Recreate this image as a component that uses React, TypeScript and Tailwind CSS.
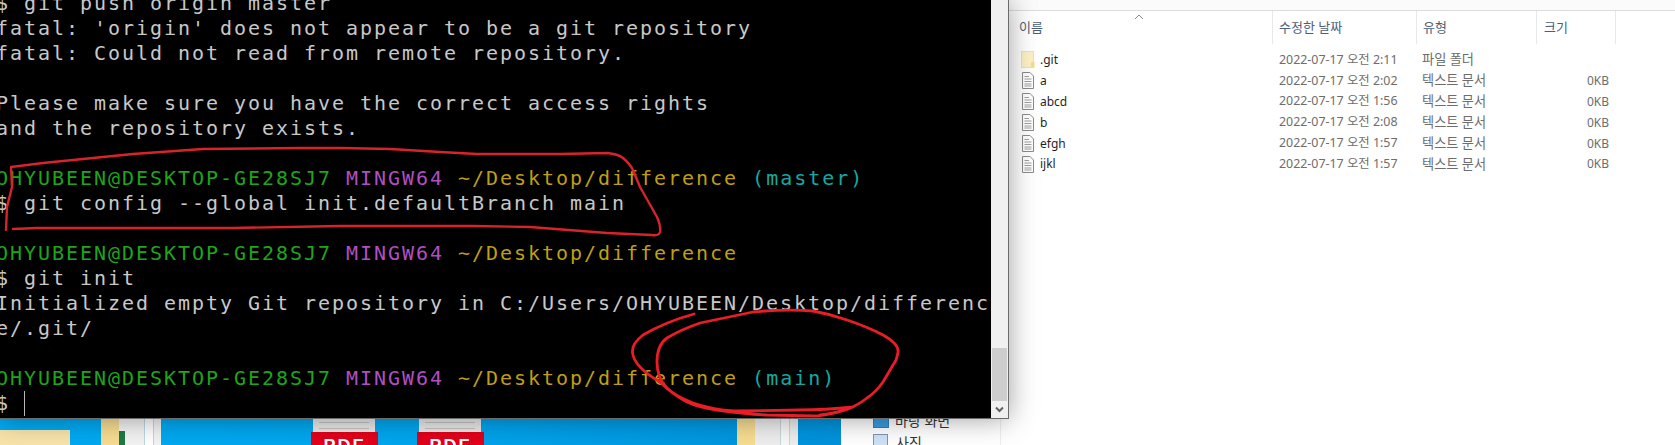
import React from "react";

const G = ({ c }: { c: string }) => <span className="text-[#1fa51c]">{c}</span>;

function Prompt({ branch }: { branch?: string }) {
  return (
    <div className="h-[25px]">
      <G c="OHYUBEEN@DESKTOP-GE28SJ7" /> <span className="text-[#b14fc2]">MINGW64</span>{" "}
      <span className="text-[#bf9f12]">~/Desktop/difference</span>
      {branch ? <span className="text-[#14a8a4]"> ({branch})</span> : null}
    </div>
  );
}

function Line({ t }: { t?: string }) {
  return <div className="h-[25px]">{t ?? ""}</div>;
}

function Terminal() {
  return (
    <div className="absolute left-0 top-0 z-10 flex h-[419px] w-[1009px] border-r border-b border-[#6b6b6b] bg-black shadow-[0_0_26px_rgba(0,0,0,0.38)]">
      <div className="h-full w-[991px] overflow-hidden">
        <div className="-ml-1 -mt-[9px] whitespace-pre font-['DejaVu_Sans_Mono',monospace] text-[20px] leading-[25px] tracking-[1.96px] text-[#c8c8c8]">
          <Line t="$ git push origin master" />
          <Line t="fatal: 'origin' does not appear to be a git repository" />
          <Line t="fatal: Could not read from remote repository." />
          <Line />
          <Line t="Please make sure you have the correct access rights" />
          <Line t="and the repository exists." />
          <Line />
          <Prompt branch="master" />
          <Line t="$ git config --global init.defaultBranch main" />
          <Line />
          <Prompt />
          <Line t="$ git init" />
          <Line t="Initialized empty Git repository in C:/Users/OHYUBEEN/Desktop/differenc" />
          <Line t="e/.git/" />
          <Line />
          <Prompt branch="main" />
          <div className="flex h-[25px]">
            <span>$ </span>
            <span className="h-[25px] w-px bg-[#b8b8b8]" />
          </div>
        </div>
      </div>
      <div className="flex h-full w-[17px] flex-col justify-end bg-[#f0f0f0]">
        <div className="mx-px h-[53px] bg-[#cdcdcd]" />
        <div className="flex h-[17px] items-center justify-center">
          <svg width="9" height="7" viewBox="0 0 9 7" fill="none">
            <path d="M1 1.5 L4.5 5 L8 1.5" stroke="#606060" strokeWidth="2" />
          </svg>
        </div>
      </div>
    </div>
  );
}

function Redlines() {
  return (
    <svg className="absolute left-0 top-0 z-20" width="1009" height="418" fill="none" strokeLinecap="round" strokeLinejoin="round">
      <path
        d="M6 230 L7 207 L12 187 L11 167 L43 163 L133 154 L203 149 L300 148 L340 148 L390 149 L440 152 L477 154 L560 154 L607 153 Q618 154 623 158 Q630 164 633 170 L640 187 L657 217 Q661 226 660 232 Q659 236 652 235 L607 233 L530 227 L473 226 L340 226 L233 228 L37 228 L13 229"
        stroke="#d8232e"
        strokeWidth="2.4"
      />
      <path
        d="M694 314 Q665 322 643 335 Q630 345 633 355 Q636 368 660 382 Q672 394 687 402 Q700 408 717 410 Q745 414 767 415 L817 416 Q840 413 853 407 Q825 410 800 410 L733 411 Q710 409 693 403 Q675 396 667 388 Q657 378 657 362 Q657 345 667 338 Q680 330 700 323 L753 312 Q785 309 813 311 Q830 314 847 320 Q868 327 883 335 Q899 344 898 352 Q897 360 893 365 L883 382 Q876 392 867 398 Q858 405 850 408 Q836 413 820 415"
        stroke="#e81d25"
        strokeWidth="2.8"
      />
    </svg>
  );
}

function Desktop() {
  return (
    <div className="relative w-[841px] shrink-0 bg-gradient-to-r from-[#00aaf3] via-[#00a6ee] to-[#0092dc]">
      <div className="absolute left-0 top-[430px] h-[15px] w-[70px] bg-[#f8e3aa]" />
      <div className="absolute left-[101px] top-[418px] h-[27px] w-[18px] bg-[#f7dc92]" />
      <div className="absolute left-[119px] top-[418px] h-[27px] w-[42px] bg-[#f3f3f3]" />
      <div className="absolute left-[119px] top-[431px] h-[14px] w-[6px] bg-[#1d7a45]" />
      <div className="absolute left-[144px] top-[418px] h-[27px] w-[10px] border-x border-[#bcd8e6] bg-white" />
      {[313, 419].map((x) => (
        <React.Fragment key={x}>
          <div
            className="absolute top-[418px] flex h-[16px] w-[62px] flex-col gap-[5px] bg-[#e9e9e9] px-[6px] pt-[4px]"
            style={{ left: x }}
          >
            <div className="h-px bg-[#c4c4c4]" />
            <div className="h-px bg-[#c4c4c4]" />
          </div>
          <div
            className="absolute top-[432px] flex h-[13px] w-[67px] justify-center overflow-hidden bg-[#e2001a] font-['Liberation_Sans',sans-serif] text-[18px] font-bold leading-[29px] tracking-[2px] text-white"
            style={{ left: x - 2 }}
          >
            PDF
          </div>
        </React.Fragment>
      ))}
      <div className="absolute left-[737px] top-[418px] h-[27px] w-[18px] bg-[#f7dc92]" />
      <div className="absolute left-[755px] top-[418px] h-[27px] w-[43px] bg-[#eeeeee]" />
      <div className="absolute left-[780px] top-[418px] h-[27px] w-[10px] border-x border-[#c8d6dd] bg-[#f8f8f8]" />
    </div>
  );
}

function FolderIcon() {
  return (
    <svg width="14" height="17" viewBox="0 0 14 17" className="shrink-0">
      <rect x="0.5" y="0.5" width="12" height="16" fill="#fdf1c4" stroke="#f2e2a4" />
      <rect x="10" y="11" width="3.5" height="5.5" fill="#f4dc8a" />
    </svg>
  );
}

function FileIcon() {
  return (
    <svg width="14" height="17" viewBox="0 0 14 17" fill="none" className="shrink-0">
      <path d="M1.5 0.5 H9 L12.5 4 V16.5 H1.5 Z" fill="#fff" stroke="#8b8b8b" />
      <path d="M3.5 4.5 H8 M3.5 7 H10.5 M3.5 9.5 H10.5 M3.5 12 H10.5 M3.5 14 H10.5" stroke="#a0a0a0" />
    </svg>
  );
}

const rows = [
  { n: ".git", d: "2022-07-17 오전 2:11", t: "파일 폴더", s: "", f: true },
  { n: "a", d: "2022-07-17 오전 2:02", t: "텍스트 문서", s: "0KB" },
  { n: "abcd", d: "2022-07-17 오전 1:56", t: "텍스트 문서", s: "0KB" },
  { n: "b", d: "2022-07-17 오전 2:08", t: "텍스트 문서", s: "0KB" },
  { n: "efgh", d: "2022-07-17 오전 1:57", t: "텍스트 문서", s: "0KB" },
  { n: "ijkl", d: "2022-07-17 오전 1:57", t: "텍스트 문서", s: "0KB" },
];

function Explorer() {
  return (
    <div className="flex min-w-0 flex-1 bg-white font-['Noto_Sans','Noto_Sans_CJK_KR',sans-serif] text-[12px]">
      <div className="h-full w-[160px] shrink-0 overflow-hidden border-r border-[#eeeeee] pl-[32px] pt-[409px] text-[#333]">
        <div className="flex h-[22px] items-center gap-[6px]">
          <span className="h-[16px] w-[16px] shrink-0 border border-[#2c7fc4] bg-[#3a9be0]" />
          <span className="text-[14px]">바탕 화면</span>
        </div>
        <div className="flex h-[22px] items-center gap-[8px]">
          <span className="h-[16px] w-[15px] shrink-0 border border-[#7b98b4] bg-[#cfe2f5]" />
          <span className="text-[14px]">사진</span>
        </div>
      </div>
      <div className="relative flex-1">
        <div className="ml-[8px] h-[11px] border-b border-[#dcdcdc] bg-[#fbfbfb]" />
        <div className="relative flex h-[33px] text-[13px] text-[#4e6078]">
          <div className="flex h-full w-[271px] items-center justify-between pl-[18px] pr-[128px]">
            <span>이름</span>
            <svg width="10" height="6" viewBox="0 0 10 6" fill="none" className="-mt-[22px]">
              <path d="M1 5 L5 1 L9 5" stroke="#8a8a8a" />
            </svg>
          </div>
          <div className="flex h-full w-[144px] items-center border-l border-[#e8e8e8] pl-[6px]">수정한 날짜</div>
          <div className="flex h-full w-[120px] items-center border-l border-[#e8e8e8] pl-[6px]">유형</div>
          <div className="flex h-full w-[80px] items-center border-x border-[#e8e8e8] pl-[7px]">크기</div>
        </div>
        <div className="mt-[5.5px] flex flex-col">
          {rows.map((r) => (
            <div key={r.n} className="flex h-[20.9px] items-center">
              <div className="flex w-[271px] items-center gap-[5px] pl-[20px] text-[#1f1f1f]">
                {r.f ? <FolderIcon /> : <FileIcon />}
                <span className="text-[12px]">{r.n}</span>
              </div>
              <div className="w-[144px] whitespace-nowrap pl-[7px] text-[12.4px] text-[#6d6d6d]">{r.d}</div>
              <div className="w-[120px] pl-[6px] text-[13.2px] text-[#6d6d6d]">{r.t}</div>
              <div className="w-[73px] text-right text-[#6d6d6d]">{r.s}</div>
            </div>
          ))}
        </div>
      </div>
    </div>
  );
}

export default function App() {
  return (
    <div className="relative flex h-[445px] w-[1675px] overflow-hidden bg-white">
      <Desktop />
      <Explorer />
      <Terminal />
      <Redlines />
    </div>
  );
}
